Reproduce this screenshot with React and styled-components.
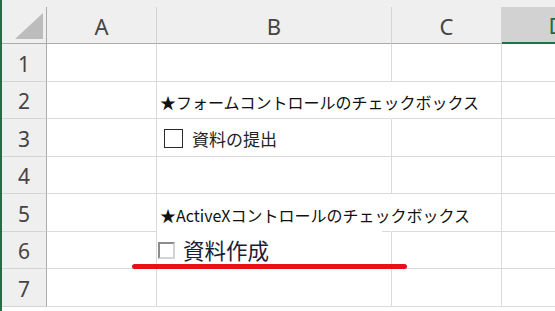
import React from 'react';
import styled, { createGlobalStyle } from 'styled-components';

const GlobalStyle = createGlobalStyle`
  html, body { margin: 0; padding: 0; background: #fff; }
  body { overflow: hidden; }
  #root { width: 555px; height: 311px; }
`;

const Sheet = styled.div`
  position: relative;
  width: 555px;
  height: 311px;
  overflow: hidden;
  box-sizing: border-box;
  border-left: 2px solid #1e7145;
  background: #fff;
  font-family: "Noto Sans CJK JP", "Noto Sans", sans-serif;
`;

const TopStrip = styled.div`
  height: 7px;
  background: #efefef;
`;

const Row = styled.div`
  display: flex;
  height: ${p => p.$h}px;
  flex: none;
`;

const Corner = styled.div`
  position: relative;
  width: 45px;
  flex: none;
  box-sizing: border-box;
  background: #efefef;
  border-right: 1px solid #ababab;
  border-bottom: 1px solid #ababab;
  svg { display: block; }
`;

const ColHeader = styled.div`
  width: ${p => p.$w}px;
  flex: none;
  box-sizing: border-box;
  display: flex;
  align-items: center;
  justify-content: center;
  background: ${p => (p.$active ? '#d2d2d2' : '#efefef')};
  border-right: 1px solid #d4d4d4;
  border-bottom: ${p => (p.$active ? '2px solid #217346' : '1px solid #ababab')};
  color: ${p => (p.$active ? '#1e6b41' : '#444')};
  font-family: "Noto Sans", sans-serif;
  font-size: 22px;
  padding-top: 1px;
`;

const RowHeader = styled.div`
  width: 45px;
  flex: none;
  box-sizing: border-box;
  display: flex;
  align-items: center;
  justify-content: center;
  background: #efefef;
  border-right: 1px solid #ababab;
  border-bottom: 1px solid #d4d4d4;
  color: #444;
  font-family: "Noto Sans", sans-serif;
  font-size: 21px;
  padding-top: 2px;
`;

const Cell = styled.div`
  width: ${p => p.$w}px;
  flex: none;
  box-sizing: border-box;
  display: flex;
  align-items: center;
  border-right: 1px solid ${p => (p.$open ? 'transparent' : '#dadada')};
  border-bottom: 1px solid #dadada;
  overflow: visible;
  white-space: nowrap;
`;

const Title = styled.span`
  padding-left: 3px;
  padding-top: 4px;
  font-size: 16px;
  letter-spacing: ${p => p.$ls}px;
  color: #111;
`;

const FormCheck = styled.label`
  display: flex;
  align-items: center;
  gap: 9px;
  padding-left: 7px;
  padding-top: 1px;
  font-size: 17px;
  color: #222;
`;

const FormBox = styled.span`
  width: 19px;
  height: 19px;
  box-sizing: border-box;
  border: 1.5px solid #2a2a2a;
  background: #fff;
`;

const ActiveXControl = styled.div`
  position: absolute;
  left: 155px;
  top: 229px;
  width: 225px;
  height: 39px;
  box-sizing: border-box;
  background: #fff;
  display: flex;
  align-items: center;
  gap: 8px;
  padding-left: 1px;
  padding-top: 2px;
  font-size: 21.5px;
  color: #1c1c38;
  white-space: nowrap;
`;

const AxBox = styled.span`
  width: 17px;
  height: 17px;
  box-sizing: border-box;
  border: 2px solid;
  border-color: #8c8c8c #d4d4d4 #d4d4d4 #8c8c8c;
  background: #fff;
  margin-top: 2px;
`;

const Underline = styled.div`
  position: absolute;
  left: 130px;
  top: 264px;
  width: 275px;
  height: 5px;
  border-radius: 3px;
  background: #e5121c;
`;

const COLS = [110, 235, 110, 110];
const ROW_H = [38, 37, 38, 37, 38, 37, 38];

export default function App() {
  const renderCells = (r) =>
    COLS.map((w, ci) => {
      let content = null;
      let open = false;
      if (ci === 1 && r === 2) {
        content = <Title $ls={0}>★フォームコントロールのチェックボックス</Title>;
        open = true;
      } else if (ci === 1 && r === 5) {
        content = <Title $ls={0}>★ActiveXコントロールのチェックボックス</Title>;
        open = true;
      } else if (ci === 1 && r === 3) {
        content = (
          <FormCheck>
            <FormBox />
            資料の提出
          </FormCheck>
        );
      }
      return (
        <Cell key={ci} $w={w} $open={open}>
          {content}
        </Cell>
      );
    });

  return (
    <>
      <GlobalStyle />
      <Sheet>
        <TopStrip />
        <Row $h={37}>
          <Corner>
            <svg width="44" height="36" viewBox="0 0 44 36">
              <polygon points="13,32 41,6 41,32" fill="#bcbcbc" />
            </svg>
          </Corner>
          <ColHeader $w={110}>A</ColHeader>
          <ColHeader $w={235}>B</ColHeader>
          <ColHeader $w={110}>C</ColHeader>
          <ColHeader $w={110} $active>D</ColHeader>
        </Row>
        {ROW_H.map((h, i) => (
          <Row key={i} $h={h}>
            <RowHeader>{i + 1}</RowHeader>
            {renderCells(i + 1)}
          </Row>
        ))}
        <ActiveXControl>
          <AxBox />
          資料作成
        </ActiveXControl>
        <Underline />
      </Sheet>
    </>
  );
}
